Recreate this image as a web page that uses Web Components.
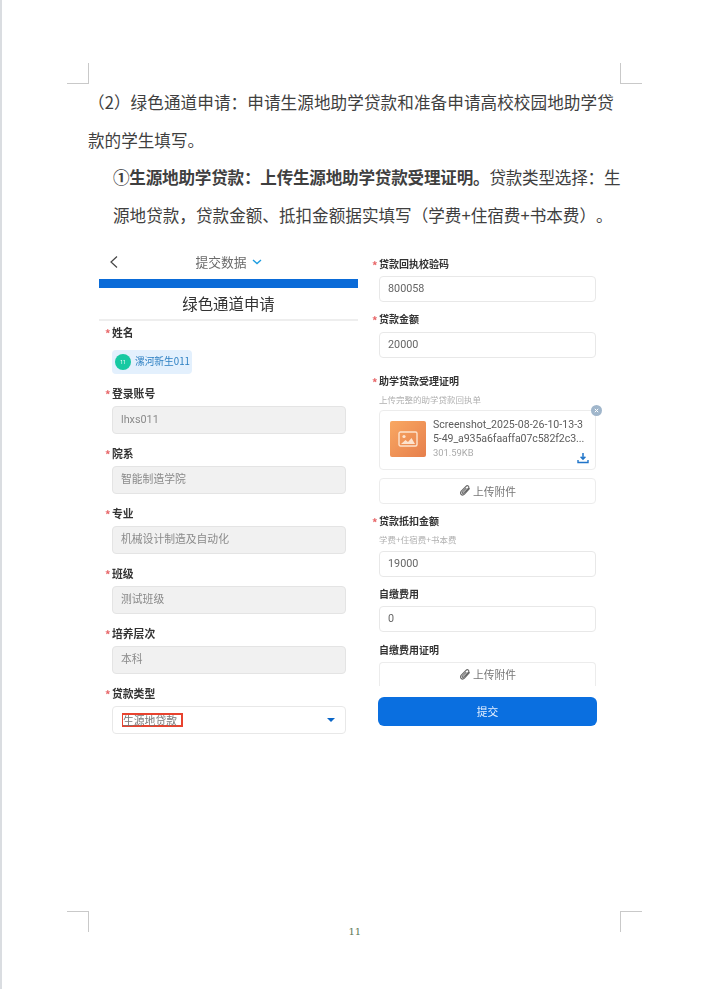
<!DOCTYPE html>
<html lang="zh-CN">
<head>
<meta charset="utf-8">
<title>绿色通道申请</title>
<style>
html,body{margin:0;padding:0;background:#fff}
body{font-family:"Noto Sans CJK SC","Noto Sans",sans-serif}
</style>
</head>
<body>
<doc-page>
  <doc-text>
    <doc-line style="letter-spacing:.07px">（2）绿色通道申请：申请生源地助学贷款和准备申请高校校园地助学贷</doc-line>
    <doc-line>款的学生填写。</doc-line>
    <doc-line indent style="letter-spacing:-.23px"><b>①生源地助学贷款：上传生源地助学贷款受理证明。</b>贷款类型选择：生</doc-line>
    <doc-line indent>源地贷款，贷款金额、抵扣金额据实填写（学费+住宿费+书本费）。</doc-line>
  </doc-text>
  <app-shot>
    <app-screen slot="left">
      <app-header></app-header>
      <form-field required label="姓名" gap="9"><user-tag>漯河新生011</user-tag></form-field>
      <form-field required label="登录账号" top="12"><text-box disabled>lhxs011</text-box></form-field>
      <form-field required label="院系" top="12"><text-box disabled>智能制造学院</text-box></form-field>
      <form-field required label="专业" top="12"><text-box disabled>机械设计制造及自动化</text-box></form-field>
      <form-field required label="班级" top="12"><text-box disabled>测试班级</text-box></form-field>
      <form-field required label="培养层次" top="12"><text-box disabled>本科</text-box></form-field>
      <form-field required label="贷款类型" top="12"><select-box>生源地贷款</select-box></form-field>
    </app-screen>
    <app-screen slot="right" side="right">
      <form-field required label="贷款回执校验码" gap="3"><text-box h="26">800058</text-box></form-field>
      <form-field required label="贷款金额" top="10"><text-box h="26">20000</text-box></form-field>
      <form-field required label="助学贷款受理证明" hint="上传完整的助学贷款回执单" top="16">
        <file-card line1="Screenshot_2025-08-26-10-13-3" line2="5-49_a935a6faaffa07c582f2c3..." size="301.59KB"></file-card>
        <upload-button h="26" style="margin-top:8px">上传附件</upload-button>
      </form-field>
      <form-field required label="贷款抵扣金额" hint="学费+住宿费+书本费" top="10" gap="5"><text-box h="26">19000</text-box></form-field>
      <form-field label="自缴费用" top="10" gap="3"><text-box h="26">0</text-box></form-field>
      <form-field label="自缴费用证明" top="11" gap="3"><upload-button h="24" cut>上传附件</upload-button></form-field>
      <submit-button>提交</submit-button>
    </app-screen>
  </app-shot>
</doc-page>

<script>
function def(name, css, html, init){
  customElements.define(name, class extends HTMLElement{
    connectedCallback(){
      if(this.shadowRoot) return;
      const r=this.attachShadow({mode:'open'});
      r.innerHTML='<style>'+css+'</style>'+(typeof html==='function'?html(this):html);
      if(init) init(this,r);
    }
  });
}
const CJK='"Noto Sans CJK SC","Noto Sans",sans-serif';
const LAT='"Roboto","Noto Sans CJK SC",sans-serif';

def('doc-page',`
  :host{display:flex;flex-direction:column;box-sizing:border-box;width:706px;height:989px;border-left:2px solid #dadde1;background:#fff;overflow:hidden}
  .marks{display:flex;justify-content:space-between;padding:0 64px 0 65px}
  .top{padding-top:63px}
  .main{flex:1;display:flex;flex-direction:column;padding-left:86px;padding-right:84px}
  .foot{height:78px;box-sizing:border-box}
  .num{font:10px/12px "DejaVu Serif",serif;color:#5f7a58;margin-top:15px;width:12px;text-align:center}
`,`
  <div class="marks top"><crop-mark corner="tl"></crop-mark><crop-mark corner="tr"></crop-mark></div>
  <div class="main"><slot></slot></div>
  <div class="marks foot"><crop-mark corner="bl"></crop-mark><div class="num">11</div><crop-mark corner="br"></crop-mark></div>
`);

def('crop-mark',`
  :host{display:block;box-sizing:border-box;width:22px;height:21px;border:0 solid #c9c9c9}
  :host([corner=tl]){border-right-width:1px;border-bottom-width:1px}
  :host([corner=tr]){border-left-width:1px;border-bottom-width:1px}
  :host([corner=bl]){border-right-width:1px;border-top-width:1px}
  :host([corner=br]){border-left-width:1px;border-top-width:1px}
`,'');

def('doc-text',`
  :host{display:block;color:#3f3f3f;font:16.6px/37.5px ${CJK};white-space:nowrap;text-spacing-trim:space-all;font-feature-settings:"chws" 0}
`,`<slot></slot>`);

def('doc-line',`
  :host{display:block;height:37.5px}
  :host([indent]){padding-left:25px}
`,`<slot></slot>`);

def('app-shot',`
  :host{display:grid;grid-template-columns:259px 235px;column-gap:12px;margin:16px 0 0 11px;filter:blur(.35px)}
`,`<slot name="left"></slot><slot name="right"></slot>`);

def('app-screen',`
  :host{display:block;box-sizing:border-box;--lab-size:10.8px}
  :host([side=right]){padding:7px 0 0 9px;width:226px;--lab-size:10px}
`,`<slot></slot>`);

def('app-header',`
  :host{display:block;margin-bottom:4px;color:#666}
  .top{height:29px;box-sizing:border-box;padding-bottom:5px;display:flex;align-items:center;justify-content:center;position:relative;font:12.8px/24px ${CJK};color:#6a6a6a}
  .top span{margin-right:5px}
  .back{position:absolute;left:10px;top:5px}
  .bar{height:9px;background:#0a6bd8}
  h1{margin:0;height:31px;font:400 15.4px/31px ${CJK};color:#333;text-align:center;border-bottom:2px solid #eee}
`,`
  <div class="top">
    <svg class="back" width="10" height="14" viewBox="0 0 10 14"><path d="M8 1.5 2 7l6 5.5" fill="none" stroke="#444" stroke-width="1.2"/></svg>
    <span>提交数据</span>
    <svg width="10" height="6" viewBox="0 0 10 6"><path d="M1 1l4 3.6L9 1" fill="none" stroke="#1e9de0" stroke-width="1.4"/></svg>
  </div>
  <div class="bar"></div>
  <h1>绿色通道申请</h1>
`);

def('form-field',`
  :host{display:block;padding-left:13px;margin-right:12px}
  .lab{position:relative;height:16px;font:700 var(--lab-size,10.8px)/14px ${CJK};color:#333}
  .star{position:absolute;left:-7px;top:0;color:#e8686a;font:700 11px/16px ${CJK}}
  .hint{height:14px;margin-top:2px;font:8.5px/14px ${CJK};color:#b0b0b0}
`,(h)=>`
  <div class="lab">${h.hasAttribute('required')?'<span class="star">*</span>':''}${h.getAttribute('label')}</div>
  ${h.getAttribute('hint')?`<div class="hint">${h.getAttribute('hint')}</div>`:''}
  <div class="body"><slot></slot></div>
`,(h,r)=>{
  h.style.marginTop=(h.getAttribute('top')||0)+'px';
  r.querySelector('.body').style.marginTop=(h.getAttribute('gap')||4)+'px';
  if(h.closest('app-screen').getAttribute('side')==='right'){h.style.paddingLeft='0';h.style.marginRight='0';}
});

def('text-box',`
  :host{display:flex;align-items:center;box-sizing:border-box;height:28px;padding:0 8px;border:1px solid #e8e8e8;border-radius:4px;background:#fff;font:10.8px/1 ${LAT};color:#666}
  :host([disabled]){background:#f1f1f1;border-color:#e4e4e4;color:#8a8a8a}
`,`<slot></slot>`,(h)=>{ if(h.getAttribute('h')) h.style.height=h.getAttribute('h')+'px'; });

def('select-box',`
  :host{display:flex;align-items:center;justify-content:space-between;box-sizing:border-box;height:28px;padding:0 10px 0 9px;border:1px solid #e8e8e8;border-radius:4px;background:#fff;font:10.8px/13px ${CJK};color:#777}
  .v{box-sizing:border-box;border:2px solid #e8432f;border-left-width:1px;width:61px;height:14px;line-height:10px;display:block}
  svg{display:block}
`,`<span class="v"><slot></slot></span><svg width="8" height="4" viewBox="0 0 8 4"><path d="M0 0h8L4 4z" fill="#0a66c8"/></svg>`);

def('user-tag',`
  :host{display:inline-flex;align-items:center;box-sizing:border-box;width:80px;height:24px;padding-left:3px;background:#e3f0fd;border-radius:4px;font:9.7px/1 ${CJK};color:#2c7fc2;white-space:nowrap;vertical-align:top}
  .a{flex:none;width:16px;height:16px;margin-right:4px;border-radius:50%;background:#18c9a2;color:#fff;font:5px/16px ${LAT};text-align:center}
`,`<span class="a">11</span><slot></slot>`);

def('file-card',`
  :host{display:block;position:relative;box-sizing:border-box;height:60px;padding:10px 8px 0 10px;border:1px solid #ececec;border-radius:4px;background:#fff}
  .row{display:flex;gap:7px}
  .t{flex:none;width:36px;height:36px;border-radius:2px;background:linear-gradient(135deg,#f9a862,#e67f4c);display:flex;align-items:center;justify-content:center}
  .n{font:10.6px/14px ${LAT};color:#5c5c5c;white-space:nowrap;margin-top:-3px}
  .l2{letter-spacing:-.1px}
  .s{font:9.4px/14px ${LAT};color:#aaa}
  .x{position:absolute;right:-7px;top:-6px;width:11px;height:11px}
  .d{position:absolute;right:6px;bottom:5px;width:12px;height:12px}
`,(h)=>`
  <div class="row">
    <div class="t"><svg width="20" height="16" viewBox="0 0 20 16"><rect x="1" y="1" width="18" height="14" rx="1.5" fill="none" stroke="#fde3cd" stroke-width="1.4"/><circle cx="6" cy="5.5" r="1.6" fill="#fde3cd"/><path d="M3 13l4.5-4 2.5 2 3.5-4 3.5 6z" fill="#fde3cd"/></svg></div>
    <div class="n"><div>${h.getAttribute('line1')}</div><div class="l2">${h.getAttribute('line2')}</div><div class="s">${h.getAttribute('size')}</div></div>
  </div>
  <svg class="x" viewBox="0 0 11 11"><circle cx="5.5" cy="5.5" r="5.5" fill="#a0b6cb"/><path d="M3.8 3.8l3.4 3.4M7.2 3.8 3.8 7.2" stroke="#fff" stroke-width="1"/></svg>
  <svg class="d" viewBox="0 0 12 12"><path d="M6 1v6M3.6 4.8 6 7.2l2.4-2.4" fill="none" stroke="#1f74c9" stroke-width="1.5"/><path d="M1 8v2.5h10V8" fill="none" stroke="#1f74c9" stroke-width="1.4"/></svg>
`);

def('upload-button',`
  :host{display:flex;align-items:center;justify-content:center;gap:2px;box-sizing:border-box;height:26px;border:1px solid #ececec;border-radius:4px;background:#fff;font:10.8px/1 ${CJK};color:#777}
  :host([cut]){border-bottom:0;border-bottom-left-radius:0;border-bottom-right-radius:0}
  svg{display:block}
`,`<svg width="12" height="12" viewBox="0 0 11 11"><path d="M9.8 3.2 5 8.4c-1 1-2.2 1-3 .3s-.8-2 .1-3l4.3-4.5c.7-.7 1.6-.7 2.2-.2s.6 1.5-.1 2.2L4.2 7.4c-.4.4-.8.4-1.1.1s-.2-.7.1-1.1l3.5-3.6" fill="none" stroke="#666" stroke-width="1"/></svg><slot></slot>`,
(h)=>{ if(h.getAttribute('h')) h.style.height=h.getAttribute('h')+'px'; });

def('submit-button',`
  :host{display:flex;align-items:center;justify-content:center;box-sizing:border-box;width:219px;height:29px;margin:11px 0 0 -1px;border-radius:6px;background:#0a6fe0;color:#e8f2ff;font:10.8px/1 ${CJK}}
`,`<slot></slot>`);
</script>
</body>
</html>
